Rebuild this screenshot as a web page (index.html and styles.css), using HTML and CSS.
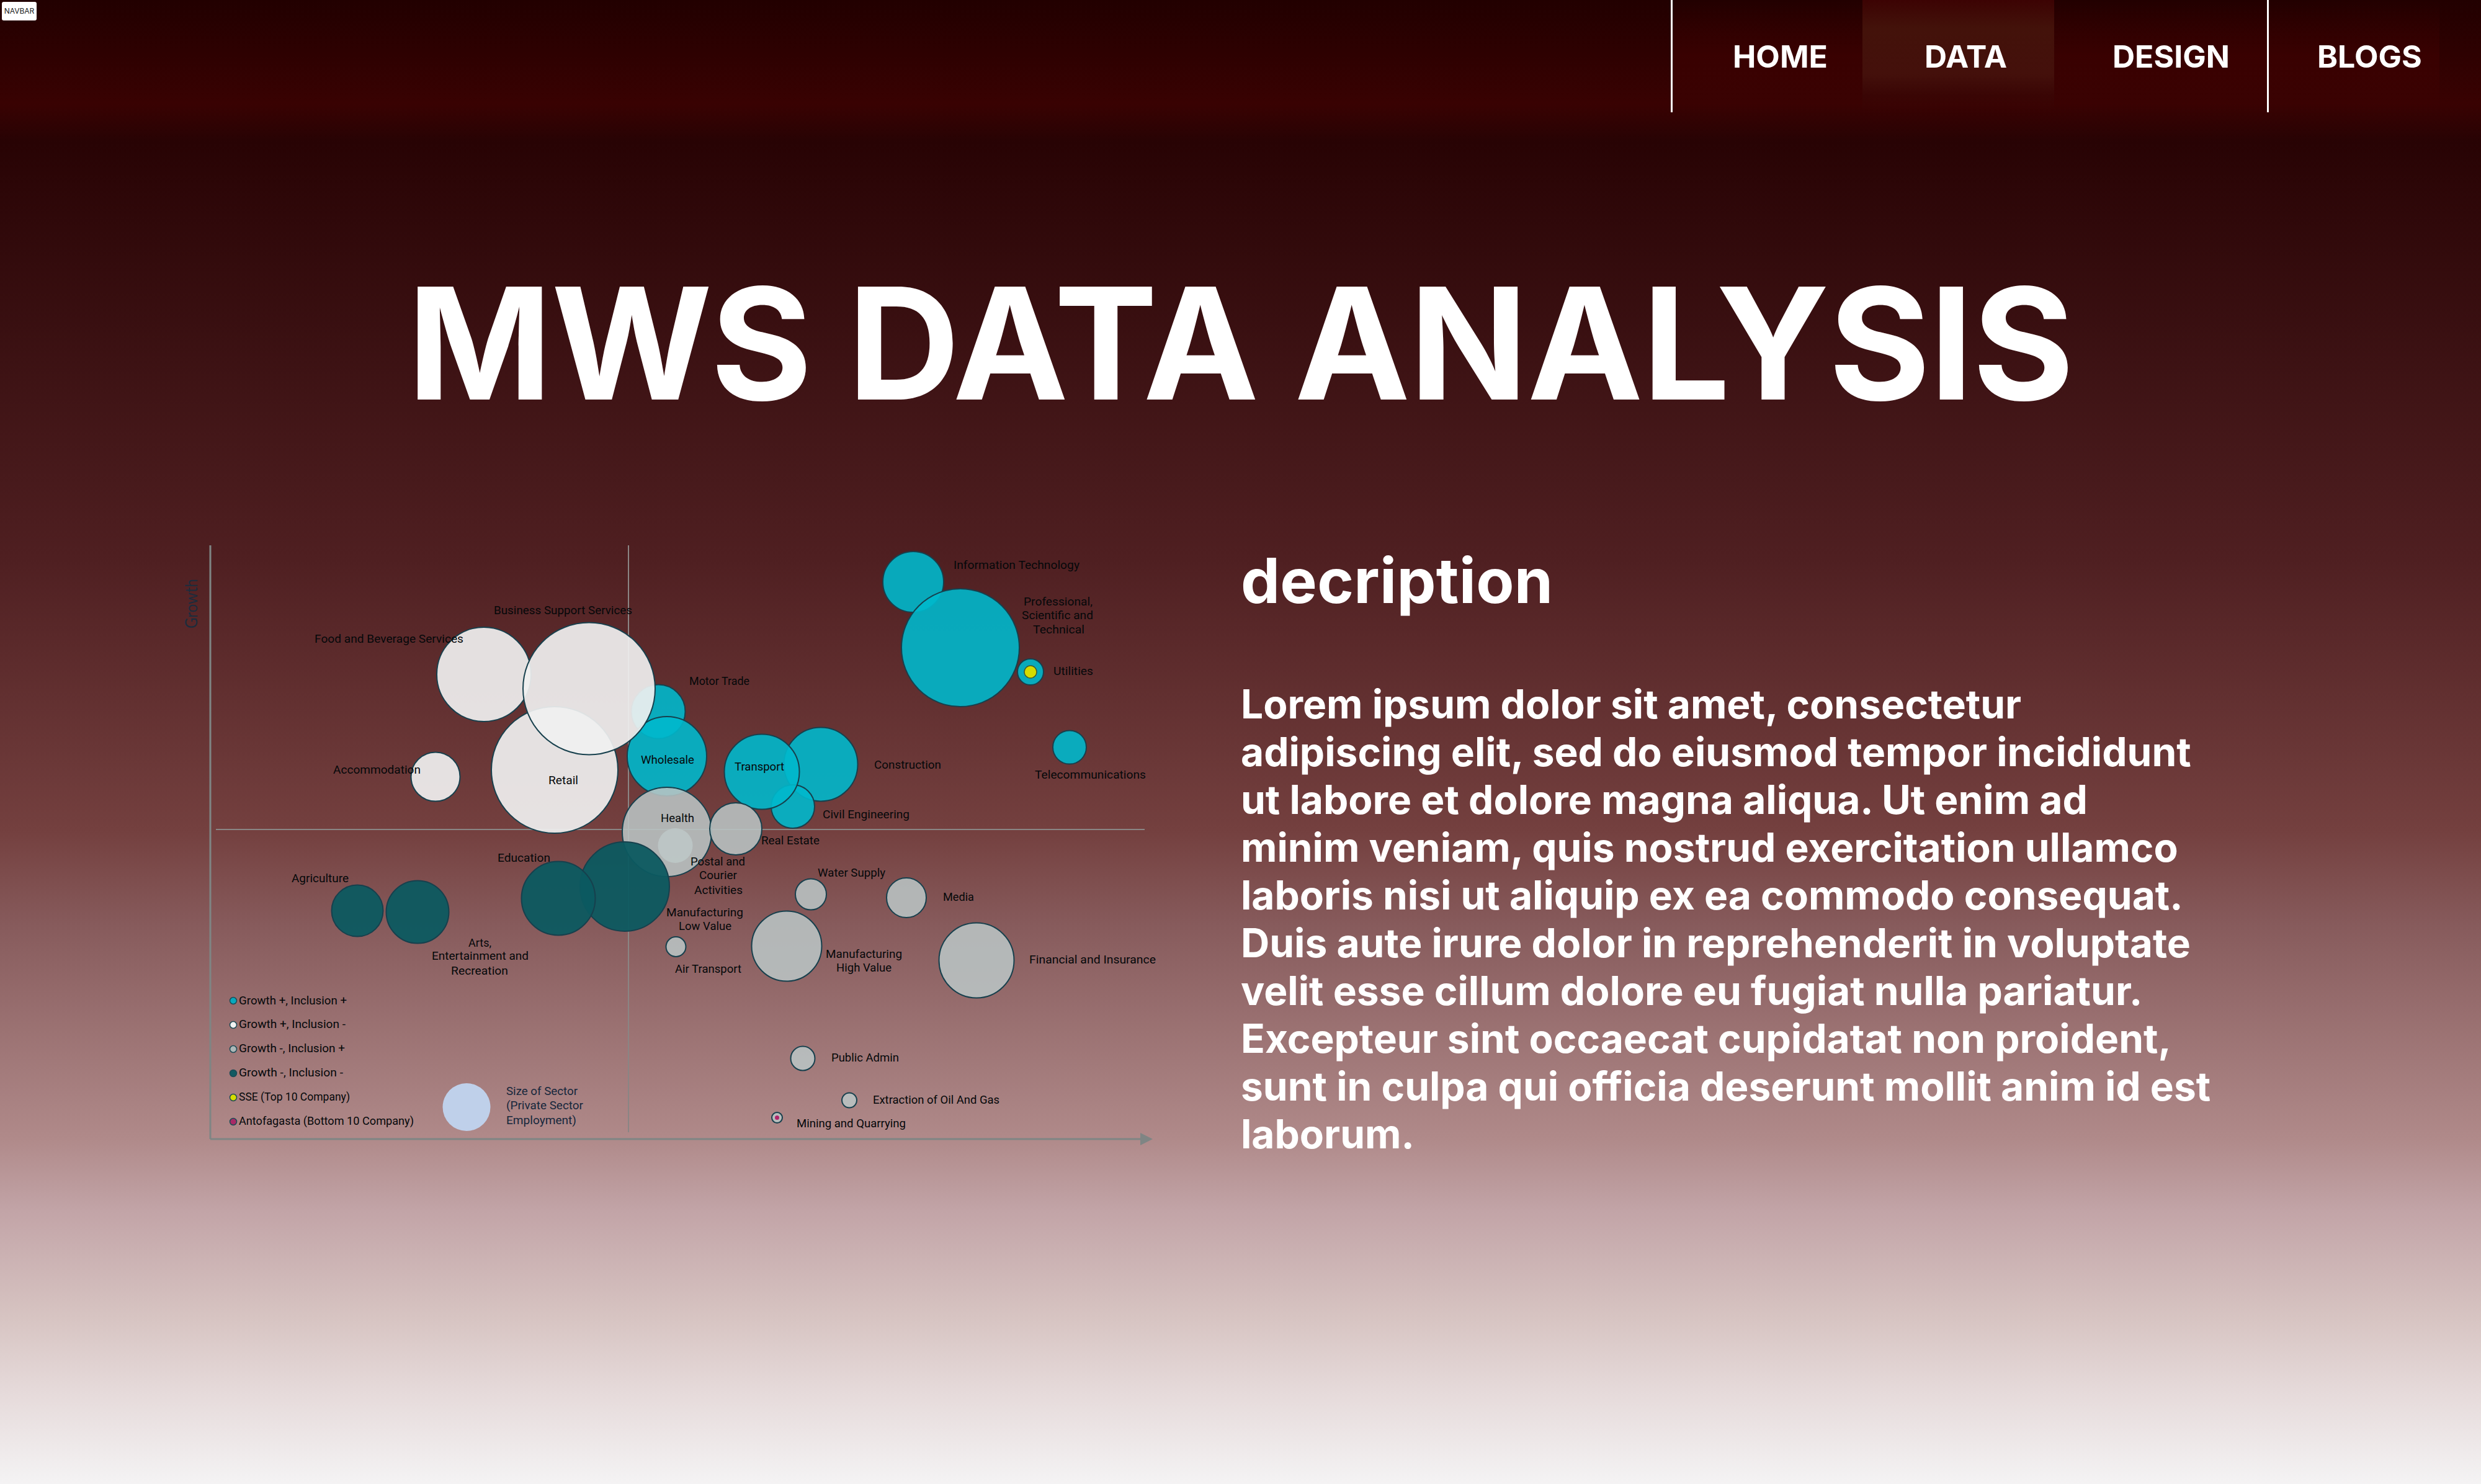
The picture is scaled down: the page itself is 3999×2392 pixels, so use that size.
FILE: index.html
```html
<!DOCTYPE html>
<html lang="en">
<head>
<meta charset="utf-8">
<title>MWS Data Analysis</title>
<link rel="stylesheet" href="styles.css">
</head>
<body>

  <div class="badge">NAVBAR</div>

  <nav class="navbar">
    <a class="nav-link nav-home" href="#">HOME</a>
    <a class="nav-link nav-data" href="#">DATA</a>
    <a class="nav-link nav-design" href="#">DESIGN</a>
    <a class="nav-link nav-blogs" href="#">BLOGS</a>
  </nav>

  <h1 class="page-title">MWS DATA ANALYSIS</h1>

  <main class="content">
    <svg class="chart" viewBox="290 870 1610 990" role="img" aria-label="Bubble chart of sectors by growth and inclusion">
      <g class="axis-thin">
        <line x1="1013" y1="879" x2="1013" y2="1825"/>
        <line x1="348" y1="1337" x2="1845" y2="1337"/>
      </g>
      <g class="axis">
        <line x1="339" y1="879" x2="339" y2="1836"/>
        <line x1="339" y1="1836" x2="1840" y2="1836"/>
      </g>
      <polygon class="arrow" points="1838,1826 1858,1836 1838,1846"/>
      <text class="axis-label" transform="translate(318 1013) rotate(-90)" textLength="80" lengthAdjust="spacingAndGlyphs">Growth</text>

      <g class="bubbles pos-pos">
        <circle cx="1472" cy="938" r="49"/>
        <circle cx="1548" cy="1044" r="95"/>
        <circle cx="1661" cy="1083" r="21"/>
        <circle cx="1724" cy="1204.5" r="27"/>
        <circle cx="1323" cy="1232" r="59.5"/>
        <circle cx="1278" cy="1300" r="35"/>
        <circle cx="1228" cy="1244" r="60.5"/>
        <circle cx="1061" cy="1147" r="43.5"/>
        <circle cx="1075" cy="1219" r="64"/>
      </g>
      <g class="bubbles pos-neg">
        <circle cx="780" cy="1087" r="76"/>
        <circle cx="702" cy="1252" r="39.5"/>
        <circle cx="894" cy="1241" r="102"/>
        <circle cx="949.5" cy="1110" r="106.5"/>
      </g>
      <g class="bubbles neg-pos">
        <circle class="no-edge" cx="1088.5" cy="1363" r="28"/>
        <circle cx="1075" cy="1341" r="72"/>
        <circle cx="1186" cy="1336" r="42"/>
        <circle cx="1307" cy="1441.5" r="25"/>
        <circle cx="1461" cy="1447" r="32"/>
        <circle cx="1268" cy="1525" r="56.5"/>
        <circle cx="1574" cy="1548" r="60.5"/>
        <circle cx="1089.5" cy="1526" r="16"/>
        <circle cx="1294" cy="1706" r="19.5"/>
        <circle cx="1369" cy="1773.5" r="12"/>
        <circle cx="1252.5" cy="1801.5" r="8.5"/>
      </g>
      <g class="bubbles neg-neg">
        <circle cx="1007" cy="1429" r="72"/>
        <circle cx="900" cy="1448" r="59.5"/>
        <circle cx="576" cy="1468" r="41.5"/>
        <circle cx="673" cy="1470" r="50.5"/>
      </g>
      <circle class="company-sse" cx="1661" cy="1083" r="10"/>
      <circle class="company-ant" cx="1252.5" cy="1801.5" r="3.5"/>

      <g class="labels">
        <text x="796" y="990" textLength="223" lengthAdjust="spacingAndGlyphs">Business Support Services</text>
        <text x="507" y="1036" textLength="240" lengthAdjust="spacingAndGlyphs">Food and Beverage Services</text>
        <text x="537" y="1247" textLength="141" lengthAdjust="spacingAndGlyphs">Accommodation</text>
        <text x="884" y="1264" textLength="48" lengthAdjust="spacingAndGlyphs">Retail</text>
        <text x="1033" y="1231" textLength="86" lengthAdjust="spacingAndGlyphs">Wholesale</text>
        <text x="1537" y="917" textLength="203" lengthAdjust="spacingAndGlyphs">Information Technology</text>
        <text x="1650" y="976" textLength="111" lengthAdjust="spacingAndGlyphs">Professional,</text>
        <text x="1647" y="998" textLength="115" lengthAdjust="spacingAndGlyphs">Scientific and</text>
        <text x="1665" y="1021" textLength="83" lengthAdjust="spacingAndGlyphs">Technical</text>
        <text x="1698" y="1088" textLength="64" lengthAdjust="spacingAndGlyphs">Utilities</text>
        <text x="1111" y="1104" textLength="97" lengthAdjust="spacingAndGlyphs">Motor Trade</text>
        <text x="1409" y="1239" textLength="108" lengthAdjust="spacingAndGlyphs">Construction</text>
        <text x="1184" y="1242" textLength="80" lengthAdjust="spacingAndGlyphs">Transport</text>
        <text x="1668" y="1255" textLength="179" lengthAdjust="spacingAndGlyphs">Telecommunications</text>
        <text x="1065" y="1325" textLength="54" lengthAdjust="spacingAndGlyphs">Health</text>
        <text x="1326" y="1319" textLength="140" lengthAdjust="spacingAndGlyphs">Civil Engineering</text>
        <text x="1227" y="1361" textLength="94" lengthAdjust="spacingAndGlyphs">Real Estate</text>
        <text x="802" y="1389" textLength="85" lengthAdjust="spacingAndGlyphs">Education</text>
        <text x="470" y="1422" textLength="92" lengthAdjust="spacingAndGlyphs">Agriculture</text>
        <text x="755" y="1526" textLength="37" lengthAdjust="spacingAndGlyphs">Arts,</text>
        <text x="696" y="1547" textLength="156" lengthAdjust="spacingAndGlyphs">Entertainment and</text>
        <text x="727" y="1571" textLength="92" lengthAdjust="spacingAndGlyphs">Recreation</text>
        <text x="1113" y="1395" textLength="88" lengthAdjust="spacingAndGlyphs">Postal and</text>
        <text x="1127" y="1417" textLength="61" lengthAdjust="spacingAndGlyphs">Courier</text>
        <text x="1119" y="1441" textLength="78" lengthAdjust="spacingAndGlyphs">Activities</text>
        <text x="1318" y="1413" textLength="109" lengthAdjust="spacingAndGlyphs">Water Supply</text>
        <text x="1520" y="1452" textLength="50" lengthAdjust="spacingAndGlyphs">Media</text>
        <text x="1074" y="1477" textLength="124" lengthAdjust="spacingAndGlyphs">Manufacturing</text>
        <text x="1094" y="1499" textLength="85" lengthAdjust="spacingAndGlyphs">Low Value</text>
        <text x="1088" y="1568" textLength="107" lengthAdjust="spacingAndGlyphs">Air Transport</text>
        <text x="1331" y="1544" textLength="123" lengthAdjust="spacingAndGlyphs">Manufacturing</text>
        <text x="1348" y="1566" textLength="89" lengthAdjust="spacingAndGlyphs">High Value</text>
        <text x="1659" y="1553" textLength="204" lengthAdjust="spacingAndGlyphs">Financial and Insurance</text>
        <text x="1340" y="1711" textLength="109" lengthAdjust="spacingAndGlyphs">Public Admin</text>
        <text x="1407" y="1779" textLength="204" lengthAdjust="spacingAndGlyphs">Extraction of Oil And Gas</text>
        <text x="1284" y="1817" textLength="176" lengthAdjust="spacingAndGlyphs">Mining and Quarrying</text>
      </g>

      <g class="legend-dots">
        <circle class="dot-teal" cx="376" cy="1613" r="5.5"/>
        <circle class="dot-white" cx="376" cy="1652" r="5.5"/>
        <circle class="dot-grey" cx="376" cy="1691" r="5.5"/>
        <circle class="dot-dark" cx="376" cy="1730" r="5.5"/>
        <circle class="dot-yellow" cx="376" cy="1769" r="5.5"/>
        <circle class="dot-pink" cx="376" cy="1808" r="5.5"/>
      </g>
      <g class="labels">
        <text x="385" y="1619" textLength="174" lengthAdjust="spacingAndGlyphs">Growth +, Inclusion +</text>
        <text x="385" y="1657" textLength="172" lengthAdjust="spacingAndGlyphs">Growth +, Inclusion -</text>
        <text x="385" y="1696" textLength="171" lengthAdjust="spacingAndGlyphs">Growth -, Inclusion +</text>
        <text x="385" y="1735" textLength="168" lengthAdjust="spacingAndGlyphs">Growth -, Inclusion -</text>
        <text x="385" y="1774" textLength="179" lengthAdjust="spacingAndGlyphs">SSE (Top 10 Company)</text>
        <text x="385" y="1813" textLength="282" lengthAdjust="spacingAndGlyphs">Antofagasta (Bottom 10 Company)</text>
      </g>

      <circle class="size-key" cx="752" cy="1784.5" r="38.5"/>
      <g class="labels size-text">
        <text x="816" y="1765" textLength="115" lengthAdjust="spacingAndGlyphs">Size of Sector</text>
        <text x="816" y="1788" textLength="124" lengthAdjust="spacingAndGlyphs">(Private Sector</text>
        <text x="816" y="1812" textLength="113" lengthAdjust="spacingAndGlyphs">Employment)</text>
      </g>
    </svg>

    <section class="description">
      <h2>decription</h2>
      <p>Lorem ipsum dolor sit amet, consectetur adipiscing elit, sed do eiusmod tempor incididunt ut labore et dolore magna aliqua. Ut enim ad minim veniam, quis nostrud exercitation ullamco laboris nisi ut aliquip ex ea commodo consequat. Duis aute irure dolor in reprehenderit in voluptate velit esse cillum dolore eu fugiat nulla pariatur. Excepteur sint occaecat cupidatat non proident, sunt in culpa qui officia deserunt mollit anim id est laborum.</p>
    </section>
  </main>

</body>
</html>
```

FILE: styles.css
```css
html {
  height: 100%;
}

body {
  margin: 0;
  height: 2392px;
  position: relative;
  overflow: hidden;
  font-family: Inter, "Liberation Sans", sans-serif;
  color: white;
  background: linear-gradient(to bottom, #220000 0%, #390202 7%, #280304 9.5%, #4f1f21 37.6%, #74403f 56%, #875b5c 62.4%, #b08a8a 76.8%, #c2a4a7 81.6%, #d7c4c2 88.8%, #e5d9d9 93.6%, #f4f3f4 100%);
}

.badge {
  position: absolute;
  top: 3px;
  left: 3px;
  width: 56px;
  height: 30px;
  box-sizing: border-box;
  background-color: white;
  border-radius: 3px;
  color: #222;
  font-size: 12px;
  line-height: 30px;
  text-align: center;
}

.navbar {
  display: flex;
  justify-content: flex-end;
  height: 181px;
  padding-right: 67px;
}

.nav-link {
  display: flex;
  align-items: center;
  box-sizing: border-box;
  height: 181px;
  color: white;
  text-decoration: none;
  font-size: 50px;
  font-weight: 700;
  background: linear-gradient(to bottom, rgba(70,0,0,0) 0%, rgba(70,0,0,0.45) 50%, rgba(70,0,0,0.3) 75%, rgba(70,0,0,0) 100%);
}

.nav-home {
  width: 309px;
  padding-left: 97px;
  border-left: 3px solid white;
}

.nav-data {
  width: 309px;
  padding-left: 100px;
  background: linear-gradient(to bottom, #3c0303 0%, #43120a 25%, #44100b 66%, rgba(58,6,5,0.8) 85%, rgba(58,6,5,0) 100%);
}

.nav-design {
  width: 343px;
  padding-left: 94px;
}

.nav-blogs {
  width: 278px;
  padding-left: 78px;
  border-left: 3px solid white;
}

.page-title {
  margin: 222px 0 0;
  text-align: center;
  font-size: 250px;
  line-height: 300px;
  font-weight: 700;
  letter-spacing: -1px;
}

.content {
  display: flex;
  align-items: flex-start;
  margin-top: 167px;
  padding-left: 290px;
}

.chart {
  display: block;
  width: 1610px;
  height: 990px;
  flex-shrink: 0;
}

.description {
  width: 1567px;
  margin-left: 100px;
  padding-top: 5px;
}

.description h2 {
  margin: 0;
  font-size: 100px;
  line-height: 121px;
  font-weight: 700;
  letter-spacing: 0.3px;
}

.description p {
  margin: 100px 0 0;
  font-size: 64px;
  line-height: 77px;
  font-weight: 700;
}

/* chart parts */
.axis line {
  stroke: #7f8584;
  stroke-width: 3;
}

.axis-thin line {
  stroke: #8a8584;
  stroke-width: 2;
}

.arrow {
  fill: #7f8584;
}

.axis-label {
  font-family: Lato, sans-serif;
  font-size: 27px;
  fill: #1c2c3c;
}

.bubbles circle {
  stroke: #17404d;
  stroke-width: 2;
}

.bubbles .no-edge {
  stroke: none;
  fill: #d4e2dc;
}

.pos-pos circle {
  fill: #00b8cc;
  fill-opacity: 0.9;
}

.pos-neg circle {
  fill: #f0f0f0;
  fill-opacity: 0.92;
}

.neg-pos circle {
  fill: #bac4c4;
  fill-opacity: 0.88;
}

.neg-neg circle {
  fill: #0c5a60;
  fill-opacity: 0.95;
}

.company-sse {
  fill: #d5dc00;
  stroke: #46592c;
  stroke-width: 1.5;
}

.company-ant {
  fill: #b0246a;
}

.labels text {
  font-family: Roboto, "Liberation Sans", sans-serif;
  font-size: 19px;
  font-weight: 450;
  fill: #05080a;
}

.size-text text {
  fill: #16273c;
}

.size-key {
  fill: #bfd0ea;
}

.legend-dots circle {
  stroke: #1d4a55;
  stroke-width: 1.5;
}

.dot-teal { fill: #07a9bd; }
.dot-white { fill: #f2f2f2; }
.dot-grey { fill: #aeb8b8; }
.dot-dark { fill: #125a62; }
.dot-yellow { fill: #d5dc00; }
.dot-pink { fill: #a82a66; }
```
